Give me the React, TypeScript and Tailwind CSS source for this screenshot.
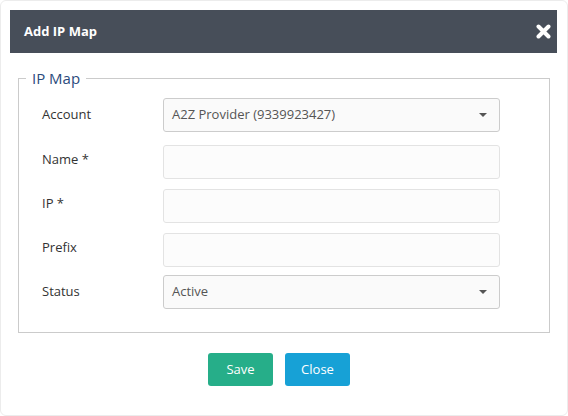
import React from "react";

type RowProps = {
  label: string;
  kind: "select" | "input";
  value?: string;
  gap: string;
};

function Caret() {
  return (
    <svg width="8" height="4" viewBox="0 0 8 4" className="shrink-0">
      <path d="M0 0 L8 0 L4 4 Z" fill="#555" />
    </svg>
  );
}

function FormRow({ label, kind, value, gap }: RowProps) {
  return (
    <div className={`flex items-center ${gap}`}>
      <label
        className={`w-[121px] shrink-0 text-[13px] text-[#333] ${
          kind === "input" ? "pb-[4px]" : "pb-0"
        }`}
      >
        {label}
      </label>

      {kind === "select" ? (
        <div className="flex h-[34px] w-[337px] items-center justify-between rounded-[3px] border border-[#cccccc] bg-[#fafafa] pl-[8px] pr-[12px] text-[13px] text-[#555]">
          <span>{value}</span>
          <Caret />
        </div>
      ) : (
        <input
          type="text"
          className="h-[34px] w-[337px] rounded-[3px] border border-[#e3e3e3] bg-[#fcfcfc] px-[8px] text-[13px] text-[#555] outline-none"
        />
      )}
    </div>
  );
}

export default function App() {
  return (
    <div
      className="h-[416px] w-[568px] overflow-hidden rounded-[6px] border border-[#ececec] bg-white pl-[9px] pr-[10px] pt-[9px]"
      style={{ fontFamily: '"Open Sans", "Liberation Sans", sans-serif' }}
    >
      {/* Header */}
      <div className="flex h-[43px] items-center justify-between bg-[#474e59] pl-[14px] pr-[6px]">
        <h3 className="text-[13px] font-bold text-white">Add IP Map</h3>
        <svg width="15" height="15" viewBox="0 0 15 15">
          <path
            d="M2.5 2.5 L12.5 12.5 M12.5 2.5 L2.5 12.5"
            stroke="white"
            strokeWidth="4"
            strokeLinecap="round"
          />
        </svg>
      </div>

      {/* Form */}
      <fieldset className="ml-[8px] mr-[7px] mt-[15px] border border-[#cbcbcb] px-[23px] pb-[23px]">
        <legend className="-ml-[16px] px-[6px] text-[15px] leading-[20px] text-[#2b4a7c]">
          IP Map
        </legend>

        <FormRow label="Account" kind="select" value="A2Z Provider (9339923427)" gap="mt-[10px]" />
        <FormRow label="Name *" kind="input" gap="mt-[13px]" />
        <FormRow label="IP *" kind="input" gap="mt-[10px]" />
        <FormRow label="Prefix" kind="input" gap="mt-[10px]" />
        <FormRow label="Status" kind="select" value="Active" gap="mt-[8px]" />
      </fieldset>

      {/* Buttons */}
      <div className="mt-[20px] flex justify-center gap-[12px] pr-[9px]">
        <button className="h-[33px] w-[65px] rounded-[3px] bg-[#26ae89] text-[13px] text-white">
          Save
        </button>
        <button className="h-[33px] w-[65px] rounded-[3px] bg-[#17a1d6] text-[13px] text-white">
          Close
        </button>
      </div>
    </div>
  );
}
